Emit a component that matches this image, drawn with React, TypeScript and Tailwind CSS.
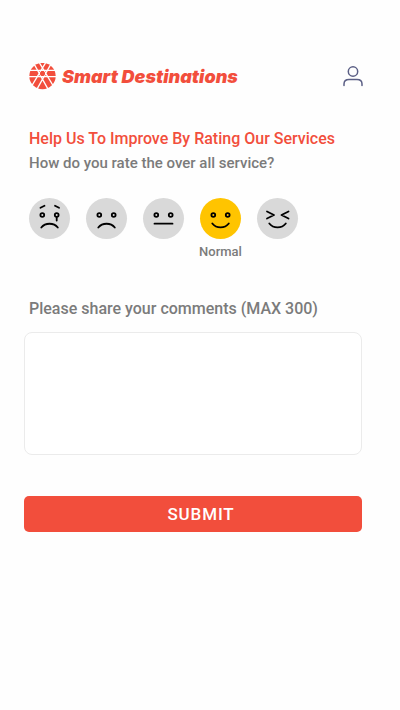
import { useState } from 'react'
import type { ReactNode } from 'react'
import { clsx } from 'clsx'

interface Rating {
  value: string
  label: string
  face: ReactNode
}

const Eyes = () => (
  <>
    <circle cx="13.3" cy="17" r="1.9" />
    <circle cx="27.7" cy="17" r="1.9" />
  </>
)

const RATINGS: Rating[] = [
  {
    value: '1',
    label: 'Terrible',
    face: (
      <>
        <path d="M11.5 9.8 15.5 7.8M26 7.8l4 2M27.7 19v3.5M12.3 29.5c4-5 12.5-5 16.5 0" />
        <Eyes />
      </>
    ),
  },
  {
    value: '2',
    label: 'Bad',
    face: (
      <>
        <path d="M12.3 29.5c4-5 12.5-5 16.5 0" />
        <Eyes />
      </>
    ),
  },
  {
    value: '3',
    label: 'Fair',
    face: (
      <>
        <path d="M11.5 25.7h18" />
        <Eyes />
      </>
    ),
  },
  {
    value: '4',
    label: 'Normal',
    face: (
      <>
        <path d="M12.3 25.5c4 5.2 12.5 5.2 16.5 0" />
        <Eyes />
      </>
    ),
  },
  {
    value: '5',
    label: 'Great',
    face: <path d="M12.3 25.5c4 5.2 12.5 5.2 16.5 0M10 13.5l7 3.5-7 3.5M31.5 13.5l-7 3.5 7 3.5" />,
  },
]

const Logo = () => (
  <svg width="27" height="27" viewBox="0 0 27 27" aria-hidden="true">
    <circle cx="13.5" cy="13" r="13.2" fill="#f24e3c" />
    <g stroke="#fefefe" strokeWidth="1.4" fill="none">
      <path d="M0 7.4h27M0 13.6h27" />
      <path d="M16.500 0 1.500 25M10.500 0l15 25M4.500 0l15 27M22.500 0l-15 27" />
    </g>
    <circle cx="13.5" cy="10.5" r="2.5" fill="#f24e3c" />
  </svg>
)

export default function App() {
  const [rating, setRating] = useState('4')
  const [comments, setComments] = useState('')

  return (
    <div className="min-h-screen bg-[#fefefe] pt-15 pr-[38px] pl-6 font-[Roboto,sans-serif] font-medium text-[#7b7b7b]">
      {/* Header */}
      <header className="flex h-8 items-center justify-between pl-[5px]">
        <a href="#" className="flex items-center gap-[6px] text-[#f24e3c]">
          <Logo />
          <span className="pt-0.5 font-[Inter,sans-serif] text-lg font-black italic">Smart Destinations</span>
        </a>
        <button type="button" aria-label="Account" className="-mr-0.5">
          <svg width="22" height="22" viewBox="0 0 22 22" fill="none" stroke="#5b5f85" strokeWidth="1.5" strokeLinecap="round" aria-hidden="true">
            <circle cx="11" cy="6.5" r="4.7" />
            <path d="M2 20.5v-1.5c0-3 2-4.5 5-4.5h8c3 0 5 1.5 5 4.5v1.5" />
          </svg>
        </button>
      </header>

      <form onSubmit={(e) => e.preventDefault()}>
        <div className="mt-[37px] pl-[5px]">
          <h1 className="text-base leading-5 text-[#f24e3c]">Help Us To Improve By Rating Our Services</h1>
          <p className="mt-1 text-[15px] leading-5">How do you rate the over all service?</p>
        </div>

        {/* Rating faces */}
        <div role="radiogroup" aria-label="Service rating" className="mt-[25px] flex h-16 gap-4 pl-[5px]">
          {RATINGS.map((r) => {
            const active = rating === r.value
            return (
              <label key={r.value} className="relative flex w-[41px] cursor-pointer flex-col items-center">
                <input
                  type="radio"
                  name="rating"
                  value={r.value}
                  checked={active}
                  onChange={() => setRating(r.value)}
                  aria-label={r.label}
                  className="sr-only"
                />
                <span className={clsx('block size-[41px] rounded-full', active ? 'bg-[#ffc400]' : 'bg-[#d9d9d9]')}>
                  <svg viewBox="0 0 41 41" fill="none" stroke="#000" strokeWidth="1.8" strokeLinecap="round" strokeLinejoin="round" aria-hidden="true">
                    {r.face}
                  </svg>
                </span>
                {active && <span className="mt-[5px] text-[13px] leading-4">{r.label}</span>}
              </label>
            )
          })}
        </div>

        {/* Comments */}
        <label htmlFor="comments" className="mt-[37px] block pl-[5px] text-base leading-5">
          Please share your comments (MAX 300)
        </label>
        <textarea
          id="comments"
          maxLength={300}
          value={comments}
          onChange={(e) => setComments(e.target.value)}
          className="mt-[13px] block h-[123px] w-full resize-none rounded-lg border border-[#ebebeb] bg-white p-3 text-sm"
        />

        <button type="submit" className="mt-[41px] h-9 w-full rounded-[5px] bg-[#f24e3c] pt-0.5 pl-4 text-[17px] tracking-wider text-white">
          SUBMIT
        </button>
      </form>
    </div>
  )
}
